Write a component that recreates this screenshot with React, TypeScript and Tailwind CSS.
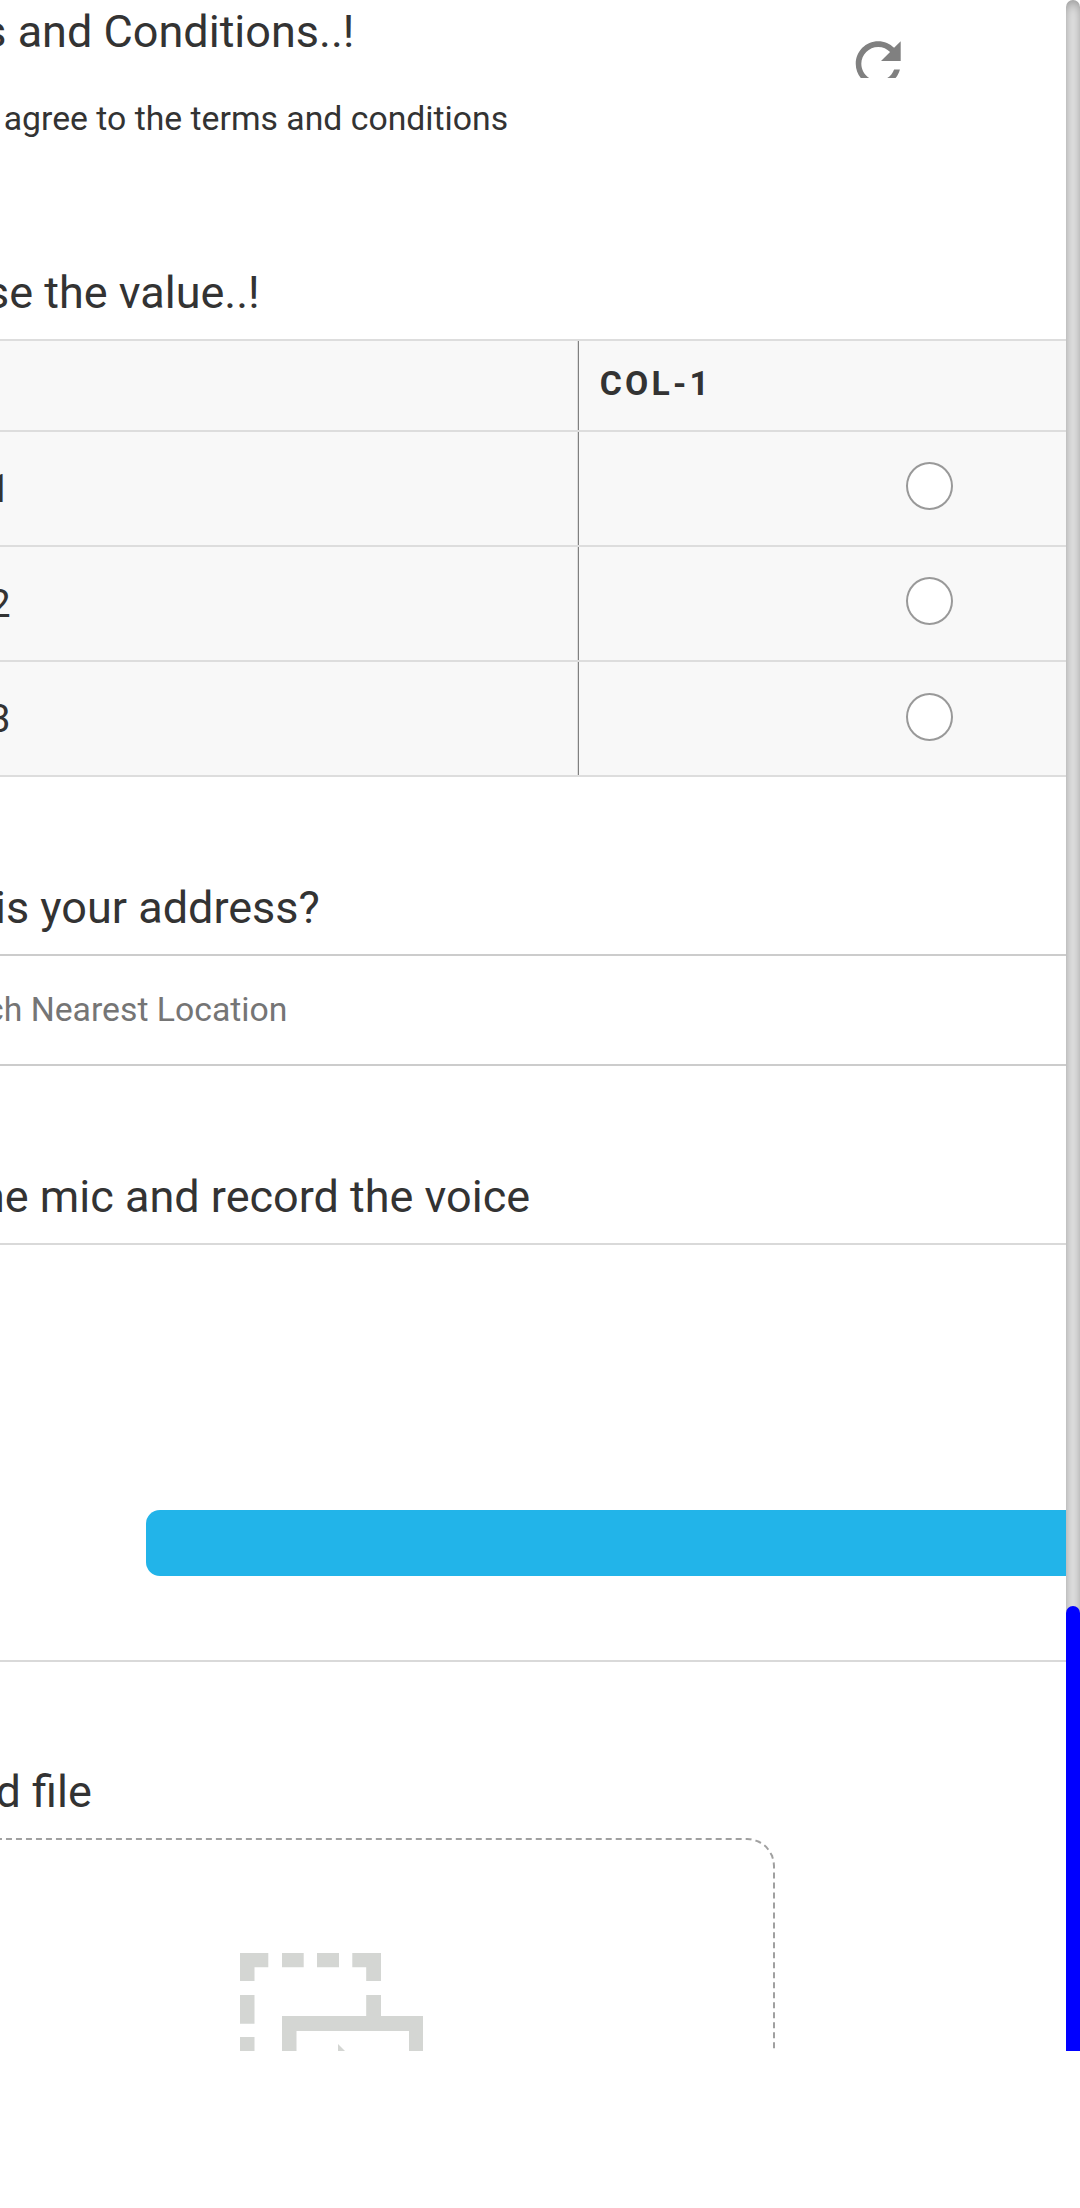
import type { ReactNode } from "react";

function Question({ children, className }: { children: ReactNode; className: string }) {
  return (
    <h2 className={`h-[60px] whitespace-nowrap text-[45px] leading-[60px] font-normal ${className}`}>
      {children}
    </h2>
  );
}

function RefreshIcon() {
  return (
    <svg className="block h-[67.5px] w-[67.5px] fill-[#808080]" viewBox="-0.16 0 24 24">
      <path d="M17.65 6.35C16.2 4.9 14.21 4 12 4c-4.42 0-7.99 3.58-7.99 8s3.57 8 7.99 8c3.73 0 6.84-2.55 7.73-6h-2.08c-.82 2.33-3.04 4-5.65 4-3.31 0-6-2.69-6-6s2.69-6 6-6c1.66 0 3.14.69 4.22 1.78L13 11h7V4l-2.35 2.35z" />
    </svg>
  );
}

function DragIcon() {
  return (
    <svg className="block h-[183px] w-[183px] fill-[#d4d6d3]" viewBox="0 0 183 183">
      <path d="M0 0h28.3v14.3H14.5V28H0zM42 0h21.7v14.3H42zM77 0h22v14.3H77zM112.3 0H141v28h-14.8V14.3h-13.9z" />
      <path d="M0 42h14.5v28.7H0zM0 84h14.5v22H0zM126.2 42H141v22h-14.8z" />
      <path fillRule="evenodd" d="M42 63h141v120H42zM56.5 78v91H169V78z" />
      <path d="M98 91l56 56H98z" />
    </svg>
  );
}

function Radio() {
  return <span className="block h-12 w-[47px] rounded-[50%] border-2 border-[#999] bg-white" />;
}

export default function App() {
  return (
    <div className="relative h-[2208px] w-[1080px] overflow-hidden bg-white font-[Roboto,sans-serif] text-[#333]">
      <div className="flex h-[2051px] overflow-hidden">
        <main className="w-[1066px] shrink-0 overflow-hidden pt-[2px]">
          <Question className="-ml-[16.75px]">s and Conditions..!</Question>
          <p className="mt-[35px] ml-[3.75px] h-11 text-[33.75px] leading-[44px] whitespace-nowrap">
            agree to the terms and conditions
          </p>

          <Question className="mt-[122px] -ml-[14px]">se the value..!</Question>
          <div className="mt-4 border-t-2 border-[#ddd] bg-[#f8f8f8]">
            <div className="flex h-[91px] border-b-2 border-[#ddd]">
              <div className="w-[578px] border-r border-[#ddd]" />
              <div className="flex-1 border-l border-[#808080] pt-[21px] pl-[20.75px] text-[33.75px] leading-[44px] font-bold tracking-[3.2px]">
                COL-1
              </div>
            </div>
            {["1", "2", "3"].map((n) => (
              <div key={n} className="flex h-[115px] border-b-2 border-[#ddd] last:*:last:pt-[31px]">
                <div className="w-[578px] border-r border-[#ddd] pt-[30px]">
                  <span className="-ml-[11.5px] block text-[39.375px] leading-[54px]">{n}</span>
                </div>
                <div className="flex-1 border-l border-[#808080] pt-[30px] pl-[327px]">
                  <Radio />
                </div>
              </div>
            ))}
          </div>

          <Question className="mt-[101px] -ml-[5px]">is your address?</Question>
          <div className="mt-4 h-28 border-y-2 border-[#ccc] pt-[32px]">
            <span className="-ml-[14px] block text-[33.75px] leading-[44px] whitespace-nowrap text-[#757575]">
              ch Nearest Location
            </span>
          </div>

          <Question className="mt-[101px] -ml-[20px]">he mic and record the voice</Question>
          <div className="mt-4 h-[419px] border-y-2 border-[#d9d9d9] pt-[265px]">
            <div className="ml-[146px] h-[66px] rounded-l-[14px] bg-[#22b4e9]" />
          </div>

          <Question className="mt-[100px] -ml-[4.5px]">d file</Question>
          <div className="mt-4 -ml-[112px] flex h-[400px] w-[887px] justify-center rounded-[28px] border-2 border-dashed border-[#a0a0a0] pt-[113px]">
            <DragIcon />
          </div>
        </main>

        <div className="flex h-[2208px] w-[14px] shrink-0 flex-col rounded-[7px] shadow-[inset_0_0_14px_gray]">
          <div className="mt-[1606px] flex-1 rounded-[7px] bg-[#00f]" />
        </div>
      </div>

      <div className="absolute top-[29.5px] left-[844px] h-[48.5px] overflow-hidden">
        <RefreshIcon />
      </div>
    </div>
  );
}
